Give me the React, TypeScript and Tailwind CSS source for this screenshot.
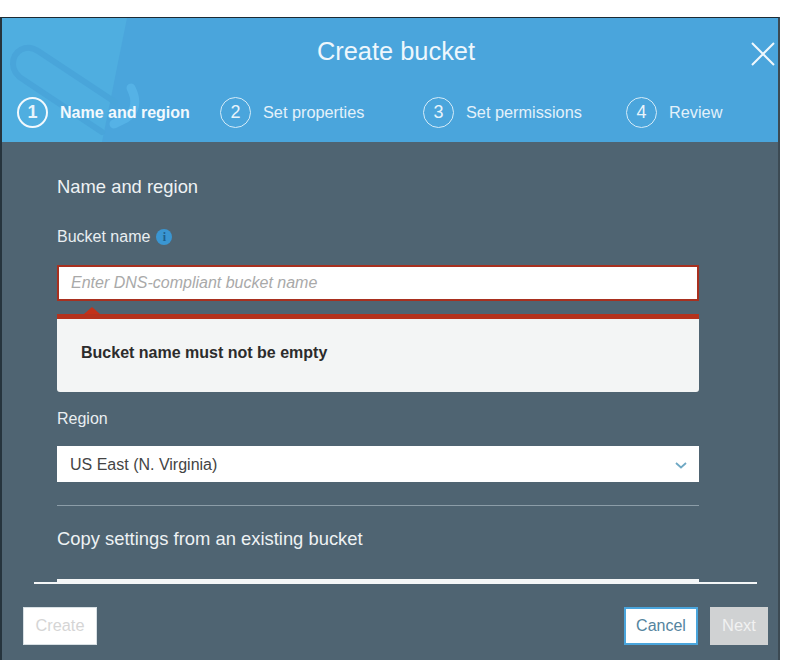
const steps = [
  { n: 1, label: 'Name and region', active: true, width: 'w-[203px]' },
  { n: 2, label: 'Set properties', active: false, width: 'w-[203px]' },
  { n: 3, label: 'Set permissions', active: false, width: 'w-[203px]' },
  { n: 4, label: 'Review', active: false, width: 'w-[120px]' },
];

const App = () => {
  return (
    <div className="h-[660px] w-[799px] overflow-hidden bg-white pt-[17px] font-['Liberation_Sans',Arial,sans-serif]">
      <div className="flex h-[643px] w-[780px] flex-col border-t border-r-2 border-l-2 border-t-[#1c2a33] border-r-[#3c4a53] border-l-[#26343d] bg-[#4f6472]">
        <header className="relative h-[124px] shrink-0 overflow-hidden bg-[#4aa5dc]">
          <svg className="absolute top-0 left-0" width="150" height="124" viewBox="0 0 150 124" fill="none">
            <path d="M0 0H125L100 124H0Z" fill="#4faee0" />
            <path d="M113 84L36 33C24 25 11 33 11 46C11 53 15 58 22 62L100 114" stroke="#49a5da" strokeWidth="6" strokeLinecap="round" />
            <path d="M129 70C136 84 133 94 124 100L112 106" stroke="#55b2e6" strokeWidth="9" strokeLinecap="round" />
          </svg>
          <h1 className="absolute top-[16px] left-0 w-full pl-[12px] text-center text-[25.4px] leading-[34px] text-[#eef7fc]">
            Create bucket
          </h1>
          <svg className="absolute top-[24px] right-[3px]" width="24" height="24" viewBox="0 0 24 24" stroke="#f0f8fd" strokeWidth="2" fill="none">
            <path d="M1 1L23 23M23 1L1 23" />
          </svg>
          <ol className="absolute top-[79px] left-[15px] flex">
            {steps.map((step) => (
              <li key={step.n} className={`flex items-center ${step.width}`}>
                <span
                  className={`flex h-[31px] w-[31px] items-center justify-center rounded-full text-[18px] text-[#e8f4fb] ${
                    step.active ? 'border-2 border-[#f2f9fd] font-bold' : 'border border-[#d4ebf8]'
                  }`}
                >
                  {step.n}
                </span>
                <span
                  className={`ml-[12px] ${
                    step.active ? 'text-[16px] font-bold text-[#f2f9fd]' : 'text-[16.3px] text-[#e3f1fa]'
                  }`}
                >
                  {step.label}
                </span>
              </li>
            ))}
          </ol>
        </header>

        <main className="flex h-[440px] shrink-0 flex-col pr-[79px] pl-[55px]">
          <h2 className="mt-[34px] text-[18.4px] leading-[21px] text-[#eef2f4]">Name and region</h2>

          <div className="mt-[31px] flex items-center gap-[6px]">
            <label className="text-[16px] leading-[18px] text-[#e9eef1]">Bucket name</label>
            <span className="flex h-[16px] w-[16px] items-center justify-center rounded-full bg-[#3a96d2] font-['Liberation_Serif',serif] text-[12px] leading-none font-bold text-[#1f5f8c]">
              i
            </span>
          </div>

          <div className="mt-[19px] flex h-[36px] items-center border-2 border-[#a8301f] bg-white px-[12px] text-[16px] text-[#a9a9a9] italic">
            Enter DNS-compliant bucket name
          </div>

          <div className="relative mt-[13px] h-[78px] rounded-b-[3px] border-t-[5px] border-[#b5321d] bg-[#f3f5f5] pt-[24px] pl-[24px] text-[16px] leading-[20px] font-bold text-[#2c2c2c]">
            <span className="absolute -top-[12px] left-[27px] h-0 w-0 border-x-[8px] border-b-[7px] border-x-transparent border-b-[#c2321a]" />
            Bucket name must not be empty
          </div>

          <label className="mt-[18px] text-[16px] leading-[18px] text-[#e9eef1]">Region</label>

          <div className="mt-[18px] flex h-[36px] items-center justify-between bg-white pt-px pr-[11px] pl-[13px] text-[16px] text-[#444]">
            US East (N. Virginia)
            <svg width="14" height="14" viewBox="0 0 14 14" fill="none" stroke="#6fa8c4" strokeWidth="1.8">
              <path d="M2 5L7 9.5L12 5" />
            </svg>
          </div>

          <div className="mt-[23px] h-px bg-[#8c9da8]" />

          <h3 className="mt-[22px] text-[18.4px] leading-[21px] text-[#eef2f4]">Copy settings from an existing bucket</h3>

          <div className="mt-[30px] h-[3px] bg-[#f4f6f7]" />
        </main>

        <div className="mr-[21px] ml-[32px] h-[2px] shrink-0 bg-[#f4f6f7]" />

        <footer className="flex h-[76px] shrink-0 items-start pt-[23px] pr-[10px] pl-[21px]">
          <button className="h-[38px] w-[74px] border border-[#d8e0e4] bg-white pb-[2px] text-[16.3px] text-[#d5d5d5]">Create</button>
          <button className="ml-auto h-[38px] w-[74px] border-2 border-[#4aa5dc] bg-white text-[16px] text-[#54849e]">Cancel</button>
          <button className="ml-[12px] h-[38px] w-[58px] bg-[#d0d2d3] pb-[2px] text-[16.5px] text-[#f1f1f1]">Next</button>
        </footer>
      </div>
    </div>
  );
};

export default App;
